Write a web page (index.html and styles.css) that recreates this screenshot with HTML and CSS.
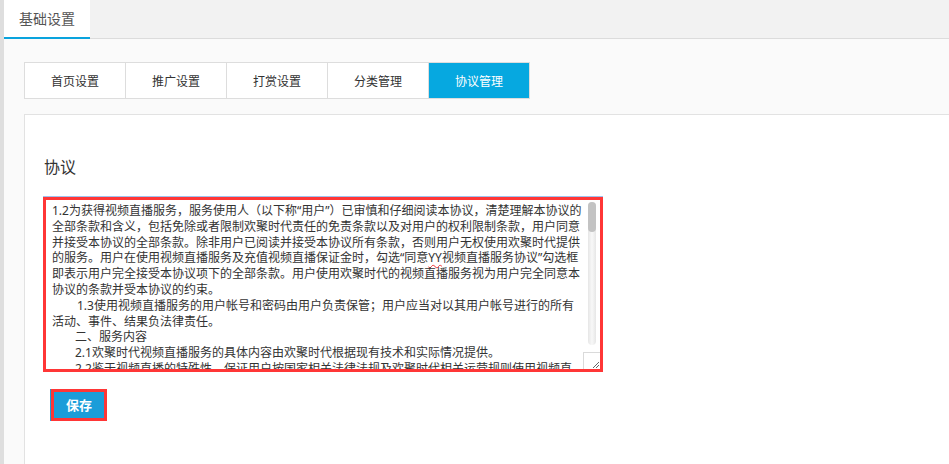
FILE: index.html
```html
<!DOCTYPE html>
<html lang="zh-CN">
<head>
<meta charset="utf-8">
<title>基础设置</title>
<link rel="stylesheet" href="styles.css">
</head>
<body>
<div class="page">
  <div class="topbar">
    <div class="toptab">基础设置</div>
  </div>
  <div class="content">
    <div class="tabs">
      <div class="tab">首页设置</div>
      <div class="tab">推广设置</div>
      <div class="tab">打赏设置</div>
      <div class="tab">分类管理</div>
      <div class="tab active">协议管理</div>
    </div>
    <div class="panel">
      <div class="label">协议</div>
      <div class="editor">
        <div class="editor-text">
          <div class="line">1.2为获得视频直播服务，服务使用人（以下称“用户”）已审慎和仔细阅读本协议，清楚理解本协议的</div>
          <div class="line">全部条款和含义，包括免除或者限制欢聚时代责任的免责条款以及对用户的权利限制条款，用户同意</div>
          <div class="line">并接受本协议的全部条款。除非用户已阅读并接受本协议所有条款，否则用户无权使用欢聚时代提供</div>
          <div class="line">的服务。用户在使用视频直播服务及充值视频直播保证金时，勾选“同意<span class="spell">YY</span>视频直播服务协议”勾选框</div>
          <div class="line">即表示用户完全接受本协议项下的全部条款。用户使用欢聚时代的视频直播服务视为用户完全同意本</div>
          <div class="line">协议的条款并受本协议的约束。</div>
          <div class="line indent">1.3使用视频直播服务的用户帐号和密码由用户负责保管；用户应当对以其用户帐号进行的所有</div>
          <div class="line">活动、事件、结果负法律责任。</div>
          <div class="line indent2">二、服务内容</div>
          <div class="line indent2">2.1欢聚时代视频直播服务的具体内容由欢聚时代根据现有技术和实际情况提供。</div>
          <div class="line indent2">2.2鉴于视频直播的特殊性，保证用户按国家相关法律法规及欢聚时代相关运营规则使用视频直</div>
        </div>
        <div class="scroll">
          <div class="track"><div class="thumb"></div></div>
          <div class="grip">
            <svg width="16" height="16" viewBox="0 0 16 16"><path d="M15 9 L9 15 M15 12 L12 15" stroke="#666" stroke-width="1" fill="none"/></svg>
          </div>
        </div>
      </div>
      <div class="save-wrap"><button class="save" type="button">保存</button></div>
    </div>
  </div>
</div>
</body>
</html>
```
FILE: styles.css
```css
html, body {
  margin: 0;
  padding: 0;
  height: 100%;
  overflow: hidden;
}
body {
  font-family: "Noto Sans CJK SC", "Noto Sans", sans-serif;
  color: #333;
  background: #fafafa;
}
.page {
  border-left: 4px solid #dedede;
  height: 100%;
  box-sizing: border-box;
  display: flex;
  flex-direction: column;
}
.topbar {
  height: 39px;
  background: #f2f2f2;
  box-shadow: inset 0 -1px 0 #dcdcdc;
  display: flex;
  flex-shrink: 0;
}
.toptab {
  width: 86px;
  height: 39px;
  box-sizing: border-box;
  background: #fff;
  border-bottom: 2px solid #0aa3dd;
  font-size: 14px;
  color: #555;
  display: flex;
  align-items: center;
  justify-content: center;
  line-height: 1;
  padding-bottom: 2px;
}
.content {
  flex: 1;
  background: #fafafa;
  padding: 23px 0 0 20px;
  display: flex;
  flex-direction: column;
}
.tabs {
  display: flex;
  height: 37px;
}
.tab {
  width: 102px;
  box-sizing: border-box;
  height: 37px;
  border: 1px solid #dddddd;
  margin-right: -1px;
  background: #fff;
  font-size: 12px;
  color: #333;
  display: flex;
  align-items: center;
  justify-content: center;
  line-height: 1;
}
.tab.active {
  background: #06a8e0;
  color: #fff;
  border-color: #dddddd;
}
.panel {
  margin-top: 15px;
  flex: 1;
  background: #fff;
  border-top: 1px solid #e2e2e2;
  border-left: 1px solid #e2e2e2;
  padding: 40px 0 0 18px;
}
.label {
  font-size: 16px;
  line-height: 22px;
  height: 22px;
  color: #333;
  padding-left: 1px;
}
.editor {
  margin-top: 20px;
  width: 560px;
  height: 175px;
  box-sizing: border-box;
  border: 3px solid #ff3636;
  box-shadow: 0 -1px 0 #9fc2ef;
  display: flex;
  background: #fff;
}
.editor-text {
  flex: 1;
  overflow: hidden;
  padding: 3px 0 0 6px;
  font-family: "Noto Sans", "Noto Sans CJK SC", sans-serif;
  font-size: 12px;
  line-height: 15.8px;
  color: #333;
}
.line {
  white-space: nowrap;
  height: 15.8px;
}
.indent {
  padding-left: 25px;
}
.indent2 {
  padding-left: 23px;
}
.spell {
  text-decoration: underline wavy #e33;
  text-decoration-thickness: 1px;
  text-underline-offset: 2px;
}
.scroll {
  width: 17px;
  display: flex;
  flex-direction: column;
}
.track {
  margin: 2px 0 0 5px;
  width: 8px;
  height: 143px;
  border-radius: 4px;
  background: linear-gradient(to right, #e6e6e6, #f8f8f8 50%, #e6e6e6);
}
.thumb {
  height: 30px;
  border-radius: 4px;
  background: #c3c3c3;
}
.grip {
  margin-top: auto;
  width: 17px;
  height: 17px;
  box-sizing: border-box;
  border-top: 1px solid #dadada;
  border-left: 1px solid #dadada;
  background: #fff;
}
.grip svg {
  display: block;
}
.save-wrap {
  margin: 17px 0 0 8px;
  display: inline-block;
  border: 3px solid #ff3636;
  box-shadow: -1px 0 0 #1b9dd9;
}
.save {
  display: block;
  width: 50px;
  height: 26px;
  border: none;
  margin: 0;
  padding: 0;
  background: #1b9dd9;
  color: #fff;
  font-family: "Noto Sans CJK SC", sans-serif;
  font-size: 13px;
  font-weight: bold;
  line-height: 26px;
}
```
